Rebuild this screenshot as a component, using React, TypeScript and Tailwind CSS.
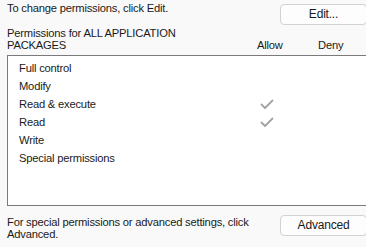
import React from 'react';

const perms = [
    { name: 'Full control', allow: false },
    { name: 'Modify', allow: false },
    { name: 'Read & execute', allow: true },
    { name: 'Read', allow: true },
    { name: 'Write', allow: false },
    { name: 'Special permissions', allow: false },
];

const Check = () => (
    <svg width="14" height="11" viewBox="0 0 14 11" fill="none">
        <path d="M1.5 5.5 L5 9 L12.5 1.5" stroke="#a3a3a3" strokeWidth="1.8" strokeLinecap="round" strokeLinejoin="round" />
    </svg>
);

export default function App() {
    return (
        <div
            className="w-[366px] h-[247px] overflow-hidden bg-[#f9f9f9] text-[11.2px] tracking-[-0.2px] leading-[15px] text-[#1a1a1a]"
            style={{ fontFamily: '"Liberation Sans", Arial, sans-serif' }}
        >
            {/* header */}
            <div className="flex items-start h-[25px] pl-[7px] pt-[1px]">
                <div className="flex-1">To change permissions, click Edit.</div>
                <button className="mt-[3px] w-[87px] h-[21px] mr-[-1px] rounded-[4px] border border-[#d2d2d2] bg-[#fdfdfd] text-[12px] text-[#1a1a1a]">
                    Edit...
                </button>
            </div>

            <div className="flex items-end pl-[7px] mt-[2px] leading-[12px]">
                <div className="w-[250px]">
                    Permissions for ALL APPLICATION
                    <br />
                    PACKAGES
                </div>
                <div className="w-[61px]">Allow</div>
                <div>Deny</div>
            </div>

            {/* list box */}
            <div className="ml-[7px] mt-[4px] w-[370px] h-[151px] border border-[#7a7a7a] bg-white pt-[3px]">
                {perms.map(p => (
                    <div key={p.name} className="flex items-center h-[18px]">
                        <div className="w-[252px] pl-[11px]">{p.name}</div>
                        {p.allow && <Check />}
                    </div>
                ))}
            </div>

            {/* footer */}
            <div className="flex items-start pl-[7px] mt-[9px]">
                <div className="flex-1 leading-[12px] pt-[1px]">
                    For special permissions or advanced settings, click
                    <br />
                    Advanced.
                </div>
                <button className="w-[87px] h-[21px] mr-[-1px] rounded-[4px] border border-[#d2d2d2] bg-[#fdfdfd] text-[12px] text-[#1a1a1a]">
                    Advanced
                </button>
            </div>
        </div>
    );
}
